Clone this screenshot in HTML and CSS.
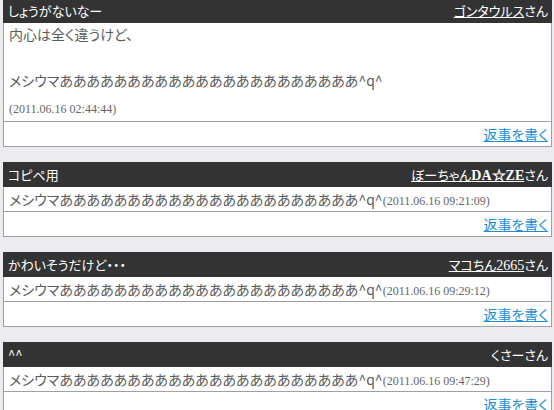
FILE: index.html
```html
<!DOCTYPE html>
<html lang="ja">
<head>
<meta charset="utf-8">
<title>コメント</title>
<link rel="stylesheet" href="styles.css">
</head>
<body>
<div class="page">
  <div class="card">
    <div class="head"><span class="title">しょうがないなー</span><span class="who"><a class="name" href="#">ゴンタウルス</a>さん</span></div>
    <div class="body multi">
      <div class="msg">内心は全く違うけど、<br><br>メシウマああああああああああああああああああああああ^q^</div>
      <div class="date block">(2011.06.16 02:44:44)</div>
    </div>
    <div class="foot"><a class="reply" href="#">返事を書く</a></div>
  </div>
  <div class="card">
    <div class="head"><span class="title">コピペ用</span><span class="who"><a class="name" href="#">ぼーちゃん<b class="latin">DA☆ZE</b></a>さん</span></div>
    <div class="body">メシウマああああああああああああああああああああああ^q^<span class="date">(2011.06.16 09:21:09)</span></div>
    <div class="foot"><a class="reply" href="#">返事を書く</a></div>
  </div>
  <div class="card">
    <div class="head"><span class="title">かわいそうだけど・・・</span><span class="who"><a class="name" href="#">マコちん<span class="latin">2665</span></a>さん</span></div>
    <div class="body">メシウマああああああああああああああああああああああ^q^<span class="date">(2011.06.16 09:29:12)</span></div>
    <div class="foot"><a class="reply" href="#">返事を書く</a></div>
  </div>
  <div class="card">
    <div class="head"><span class="title">^^</span><span class="who">くさーさん</span></div>
    <div class="body">メシウマああああああああああああああああああああああ^q^<span class="date">(2011.06.16 09:47:29)</span></div>
    <div class="foot"><a class="reply" href="#">返事を書く</a></div>
  </div>
</div>
</body>
</html>
```

FILE: styles.css
```css
html, body {
  margin: 0;
  padding: 0;
  background: #ebebf0;
}
body {
  font-family: "Noto Sans CJK JP", "Noto Sans", sans-serif;
  font-feature-settings: "palt";
  color: #5c5c5c;
}
.page {
  display: flex;
  flex-direction: column;
  gap: 15px;
  margin-top: -2px;
  padding-left: 3px;
}
.card {
  width: 549px;
  box-sizing: border-box;
  background: #fff;
  border: 1px solid #a0a0a0;
  border-top: none;
}
.head {
  display: flex;
  justify-content: space-between;
  align-items: center;
  height: 25px;
  margin: 0 -1px;
  padding: 0 4px 0 5px;
  background: #333;
  color: #fff;
  font-size: 13px;
}
.name {
  color: #fff;
  text-decoration: underline;
}
.latin {
  font-family: "Liberation Serif", serif;
  font-size: 14px;
}
b.latin {
  font-weight: bold;
}
.body {
  height: 24px;
  line-height: 24px;
  padding: 0 5px;
  font-size: 14px;
  border-bottom: 1px solid #a0a0a0;
  white-space: nowrap;
}
.body.multi {
  height: auto;
  line-height: 23px;
}
.msg {
  line-height: 23px;
}
.date {
  font-family: "Liberation Serif", serif;
  font-size: 12px;
  color: #666;
}
.date.block {
  margin-top: 6px;
}
.foot {
  display: flex;
  justify-content: flex-end;
  align-items: center;
  height: 24px;
  padding: 0 3px;
}
.reply {
  font-size: 14px;
  color: #1b8fd6;
  text-decoration: underline;
}
```
